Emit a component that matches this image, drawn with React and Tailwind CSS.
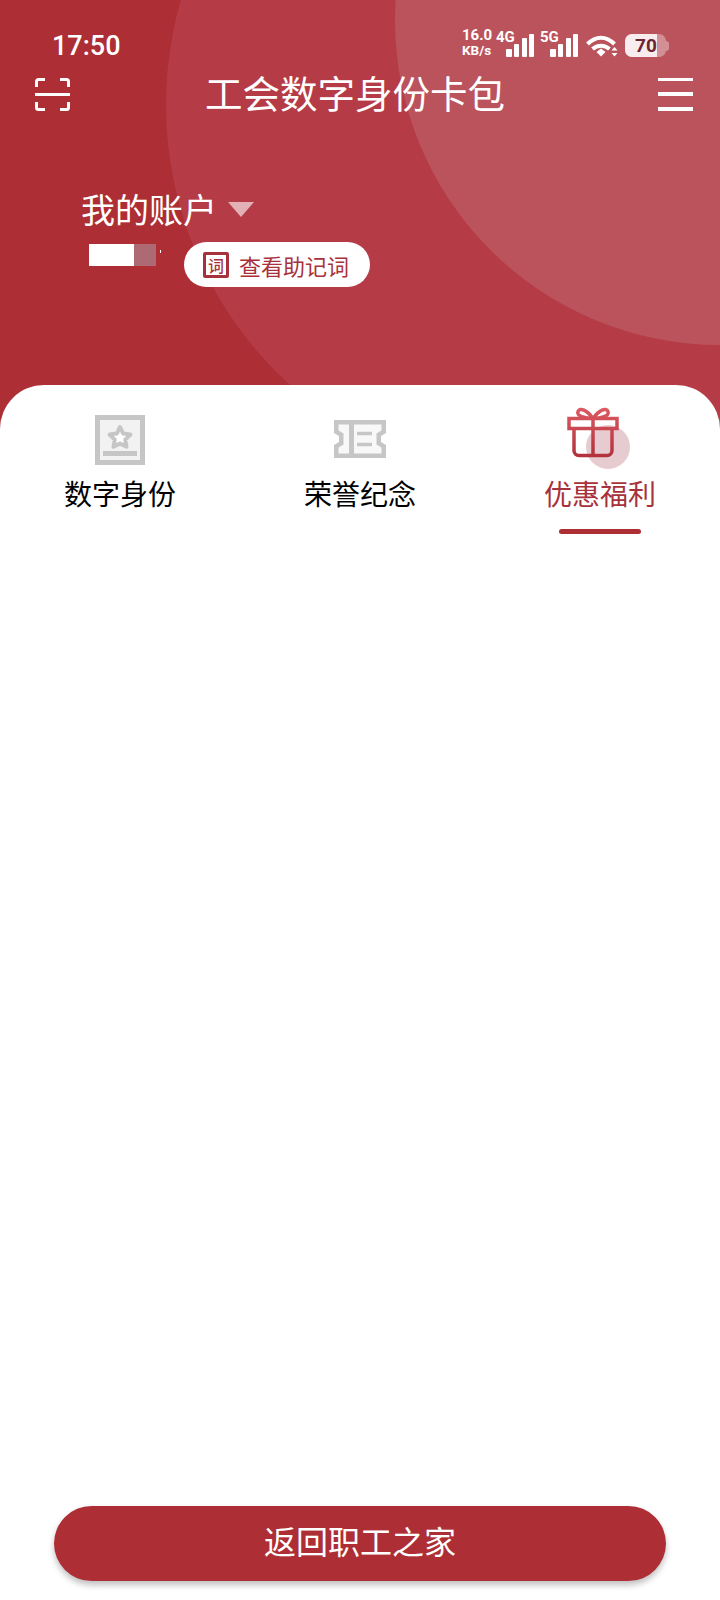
const cjk = "font-['Noto_Sans_CJK_SC','Noto_Sans',sans-serif]";

function ScanIcon() {
  return (
    <svg width="35" height="33" viewBox="0 0 35 33" fill="none" stroke="#fff" strokeWidth="3">
      <path d="M1.500 9V3.500a2 2 0 0 1 2-2H10M25 1.500h6.500a2 2 0 0 1 2 2V9M0 16.500h35M1.500 24v5.500a2 2 0 0 0 2 2H10M25 31.500h6.500a2 2 0 0 0 2-2V24" />
    </svg>
  );
}

function Bars() {
  return (
    <svg width="28" height="23" viewBox="0 0 28 23" fill="#fff">
      <rect x="0" y="15" width="6" height="8" rx="1" />
      <rect x="8" y="10" width="5" height="13" rx="1" />
      <rect x="16" y="4" width="5" height="19" rx="1" />
      <rect x="23" y="0" width="5" height="23" rx="1" />
    </svg>
  );
}

function StatusIcons() {
  return (
    <div className="flex items-end h-[27px] text-white font-['Roboto',sans-serif] font-bold">
      <div className="flex flex-col w-[34px] whitespace-nowrap">
        <span className="text-[15px] leading-[15px]">16.0</span>
        <span className="text-[13.500px] leading-[13px] mt-[1px]">KB/s</span>
      </div>
      <div className="relative w-[38px] h-[27px] flex justify-end items-end">
        <span className="absolute left-0 top-0 text-[15px] leading-[15px]">4G</span>
        <Bars />
      </div>
      <div className="relative w-[38px] h-[27px] ml-[6px] flex justify-end items-end">
        <span className="absolute left-0 top-0 text-[15px] leading-[15px]">5G</span>
        <Bars />
      </div>
      <svg className="ml-[8px]" width="32" height="22" viewBox="0 0 32 22" fill="none">
        <path d="M1.500 9C10 0.500 20 0.500 28.500 9" stroke="#fff" strokeWidth="4" />
        <path d="M6.500 14C11.500 9.500 18.500 9.500 23.500 14" stroke="#fff" strokeWidth="4" />
        <path d="M10.500 17L15 13.500L19.500 17L15 21.500Z" fill="#fff" />
        <path d="M25.500 15.500l3-3.500 3 3.500zM25.500 18l3 3.500 3-3.500z" fill="#fff" />
      </svg>
      <div className="ml-[7px] flex items-center h-[23px]">
        <div className="relative w-[41px] h-[23px] rounded-[7px] bg-[#ffffff59] overflow-hidden">
          <div className="w-[32px] h-full bg-[#f8ecee]" />
          <span className="absolute left-[10px] top-0 text-[19px] leading-[23px] text-[#6d2630]">70</span>
        </div>
        <div className="w-[3px] h-[10px] bg-[#ffffff59] rounded-r-sm" />
      </div>
    </div>
  );
}

function IdIcon() {
  return (
    <svg width="52" height="52" viewBox="0 0 52 52" fill="none">
      <rect x="3.500" y="3.500" width="45" height="45" stroke="#c6c6c6" strokeWidth="5" fill="#f2f2f2" />
      <path d="M26 13l3.200 6.600 7.200 1-5.200 5 1.300 7.200-6.500-3.400-6.500 3.400 1.300-7.200-5.200-5 7.200-1z" stroke="#c6c6c6" strokeWidth="4" fill="#fff" strokeLinejoin="round" />
      <rect x="9" y="37" width="34" height="5" fill="#c6c6c6" />
    </svg>
  );
}

function TicketIcon() {
  return (
    <svg width="52" height="38" viewBox="0 0 52 38" fill="none" stroke="#c6c6c6" strokeWidth="4.500">
      <path d="M2.250 2.250h47.500v9.500l-5 3v8.500l5 3v9.500H2.250v-9.500l5-3v-8.500l-5-3z" fill="#f8f8f8" />
      <path d="M17.500 2v34" strokeWidth="5" />
      <path d="M23 13.500h15M23 24.500h15" strokeWidth="3.500" />
    </svg>
  );
}

function GiftIcon() {
  return (
    <div className="relative w-[64px] h-[62px]">
      <div className="absolute left-[19px] top-[18px] w-[44px] h-[44px] rounded-full bg-[#e6ccd0]" />
      <svg className="absolute left-0 top-0" width="52" height="52" viewBox="0 0 52 52" fill="none" stroke="url(#giftStroke)" strokeWidth="3.500">
        <defs>
          <linearGradient id="giftStroke" gradientUnits="userSpaceOnUse" x1="0" y1="0" x2="0" y2="52">
            <stop offset="0" stopColor="#dd5a62" />
            <stop offset="1" stopColor="#b02f3a" />
          </linearGradient>
        </defs>
        <path d="M2 11.500h48v10H2z" />
        <path d="M7 21.500v22a5 5 0 0 0 5 5h28a5 5 0 0 0 5-5v-22" />
        <path d="M26 11.500v37" />
        <path d="M26 11.500C20 3 13 0 11 4.500 9 9 18 11.500 26 11.500ZM26 11.500C32 3 39 0 41 4.500 43 9 34 11.500 26 11.500Z" />
      </svg>
    </div>
  );
}

function WordIcon() {
  return (
    <div className={`w-[26px] h-[26px] border-[3px] border-[#a8323b] rounded-[2px] flex items-center justify-center text-[16px] leading-none font-medium text-[#a8323b] ${cjk}`}>
      词
    </div>
  );
}

function Tab({ icon, label, active, top }) {
  return (
    <div className="flex flex-col items-center">
      <div className={`h-[64px] flex items-start ${top}`}>{icon}</div>
      <div className={`mt-[3px] text-[28px] leading-[38px] whitespace-nowrap ${cjk} ${active ? 'text-[#a8323b]' : 'text-black'}`}>
        {label}
      </div>
      <div className={`mt-[17px] w-[82px] h-[5px] rounded-full ${active ? 'bg-[#ad2e34]' : 'bg-transparent'}`} />
    </div>
  );
}

export default function App() {
  return (
    <div className={`relative w-[720px] h-[1600px] bg-white overflow-hidden ${cjk}`}>
      <header className="relative h-[431px] bg-[#ad2e34] overflow-hidden">
        <div className="absolute left-[166px] top-[-273px] w-[756px] h-[756px] rounded-full bg-[#b53c47]" />
        <div className="absolute left-[395px] top-[-305px] w-[650px] h-[650px] rounded-full bg-[#bb535c]" />
        <div className="relative">
          <div className="flex justify-between items-start pt-[30px] pl-[52px] pr-[51px] h-[75px]">
            <span className="text-white text-[27px] leading-[32px] font-medium font-['Roboto',sans-serif]">17:50</span>
            <StatusIcons />
          </div>
          <div className="flex items-center justify-between pl-[35px] pr-[27px] h-[38px]">
            <ScanIcon />
            <span className="text-white text-[37.500px] leading-[38px] mb-[5px] mr-[18px] whitespace-nowrap">工会数字身份卡包</span>
            <div className="flex flex-col justify-between w-[35px] h-[33px]">
              <div className="h-[3.500px] bg-white" />
              <div className="h-[3.500px] bg-white" />
              <div className="h-[3.500px] bg-white" />
            </div>
          </div>
          <div className="flex items-center mt-[74px] pl-[81px] h-[44px]">
            <span className="text-white text-[34px] leading-[44px]">我的账户</span>
            <div className="ml-[11px] w-0 h-0 border-l-[13px] border-r-[13px] border-t-[15px] border-l-transparent border-r-transparent border-t-[#ffffff99]" />
          </div>
          <div className="flex items-start mt-[11px] pl-[89px]">
            <div className="mt-[2px] w-[45px] h-[22px] bg-white" />
            <div className="mt-[2px] w-[22px] h-[22px] bg-[#ad6a72]" />
            <div className="mt-[8px] ml-[4px] w-[1px] h-[3px] bg-white" />
            <div className="ml-[23px] w-[186px] h-[45px] rounded-full bg-white flex items-center pl-[19px]">
              <WordIcon />
              <span className="ml-[10px] text-[22px] leading-[30px] text-[#a8323b] whitespace-nowrap">查看助记词</span>
            </div>
          </div>
        </div>
      </header>
      <main className="relative -mt-[46px] h-[1215px] bg-white rounded-t-[44px]">
        <div className="grid grid-cols-3 pt-[22px]">
          <Tab icon={<IdIcon />} label="数字身份" top="pt-[7px]" />
          <Tab icon={<TicketIcon />} label="荣誉纪念" top="pt-[13px]" />
          <Tab icon={<div className="-ml-[2px]"><GiftIcon /></div>} label="优惠福利" active top="" />
        </div>
      </main>
      <button className="absolute left-[54px] top-[1506px] w-[612px] h-[75px] pb-[7px] rounded-full bg-[#ad2e34] text-white text-[32px] shadow-[0_4px_6px_rgba(0,0,0,0.25)]">
        返回职工之家
      </button>
    </div>
  );
}
